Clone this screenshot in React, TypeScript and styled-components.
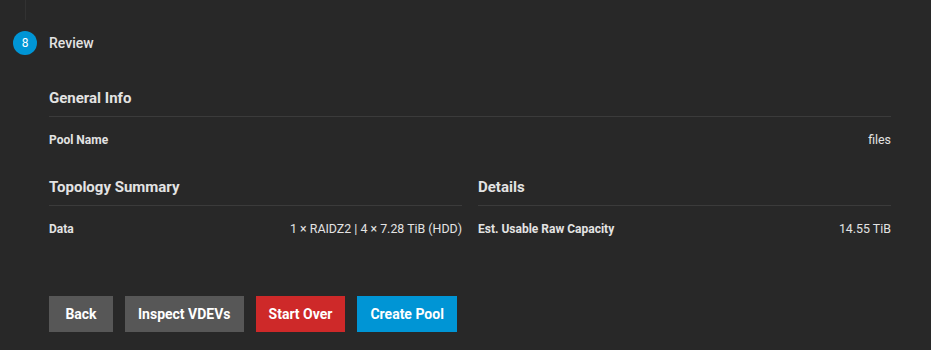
import styled, { createGlobalStyle } from "styled-components";

const GlobalStyle = createGlobalStyle`
  body {
    margin: 0;
    background-color: #282828;
    font-family: Roboto, "Liberation Sans", sans-serif;
    color: #e3e3e3;
  }
`;

const Page = styled.div`
  width: 931px;
  height: 350px;
  background-color: #282828;
`;

const Connector = styled.div`
  width: 1px;
  height: 20px;
  margin-left: 25px;
  background-color: #323232;
`;

const StepHeader = styled.div`
  display: flex;
  align-items: center;
  gap: 12px;
  height: 46px;
  padding-left: 13px;
`;

const StepIcon = styled.div`
  width: 24px;
  height: 24px;
  border-radius: 50%;
  background-color: #0095d5;
  color: #fff;
  font-size: 12px;
  display: flex;
  align-items: center;
  justify-content: center;
`;

const StepLabel = styled.span`
  font-size: 14px;
  font-weight: 500;
  color: #e3e3e3;
`;

const Content = styled.div`
  padding: 0 40px 0 49px;
`;

const SectionTitle = styled.h3<{ $top?: number }>`
  margin: ${(p) => p.$top ?? 0}px 0 0;
  font-size: 15px;
  font-weight: 700;
  line-height: 20px;
  padding-bottom: 8px;
  border-bottom: 1px solid #3b3b3b;
`;

const Row = styled.div`
  display: flex;
  justify-content: space-between;
  align-items: center;
  padding: 12px 0;
  line-height: 22px;
  font-size: 12px;
`;

const Label = styled.span`
  font-weight: 700;
`;

const Value = styled.span`
  font-size: 12.4px;
  font-weight: 400;
`;

const Columns = styled.div`
  display: grid;
  grid-template-columns: 1fr 1fr;
  gap: 16px;
  margin-top: 14px;
`;

const Actions = styled.div`
  display: flex;
  gap: 12px;
  margin-top: 44px;
`;

const Button = styled.button<{ $color: string }>`
  height: 36px;
  min-width: 64px;
  padding: 0 13px;
  border: none;
  border-radius: 0;
  background-color: ${(p) => p.$color};
  color: #fff;
  font-family: Roboto, "Liberation Sans", sans-serif;
  font-size: 14px;
  font-weight: 700;
  cursor: pointer;
`;

function App() {
  return (
    <Page>
      <GlobalStyle />
      <Connector />
      <StepHeader>
        <StepIcon>8</StepIcon>
        <StepLabel>Review</StepLabel>
      </StepHeader>
      <Content>
        <SectionTitle $top={22}>General Info</SectionTitle>
        <Row>
          <Label>Pool Name</Label>
          <Value>files</Value>
        </Row>
        <Columns>
          <div>
            <SectionTitle>Topology Summary</SectionTitle>
            <Row>
              <Label>Data</Label>
              <Value>1 × RAIDZ2 | 4 × 7.28 TiB (HDD)</Value>
            </Row>
          </div>
          <div>
            <SectionTitle>Details</SectionTitle>
            <Row>
              <Label>Est. Usable Raw Capacity</Label>
              <Value>14.55 TiB</Value>
            </Row>
          </div>
        </Columns>
        <Actions>
          <Button $color="#575757">Back</Button>
          <Button $color="#575757">Inspect VDEVs</Button>
          <Button $color="#ce2929">Start Over</Button>
          <Button $color="#0095d5">Create Pool</Button>
        </Actions>
      </Content>
    </Page>
  );
}

export default App;
